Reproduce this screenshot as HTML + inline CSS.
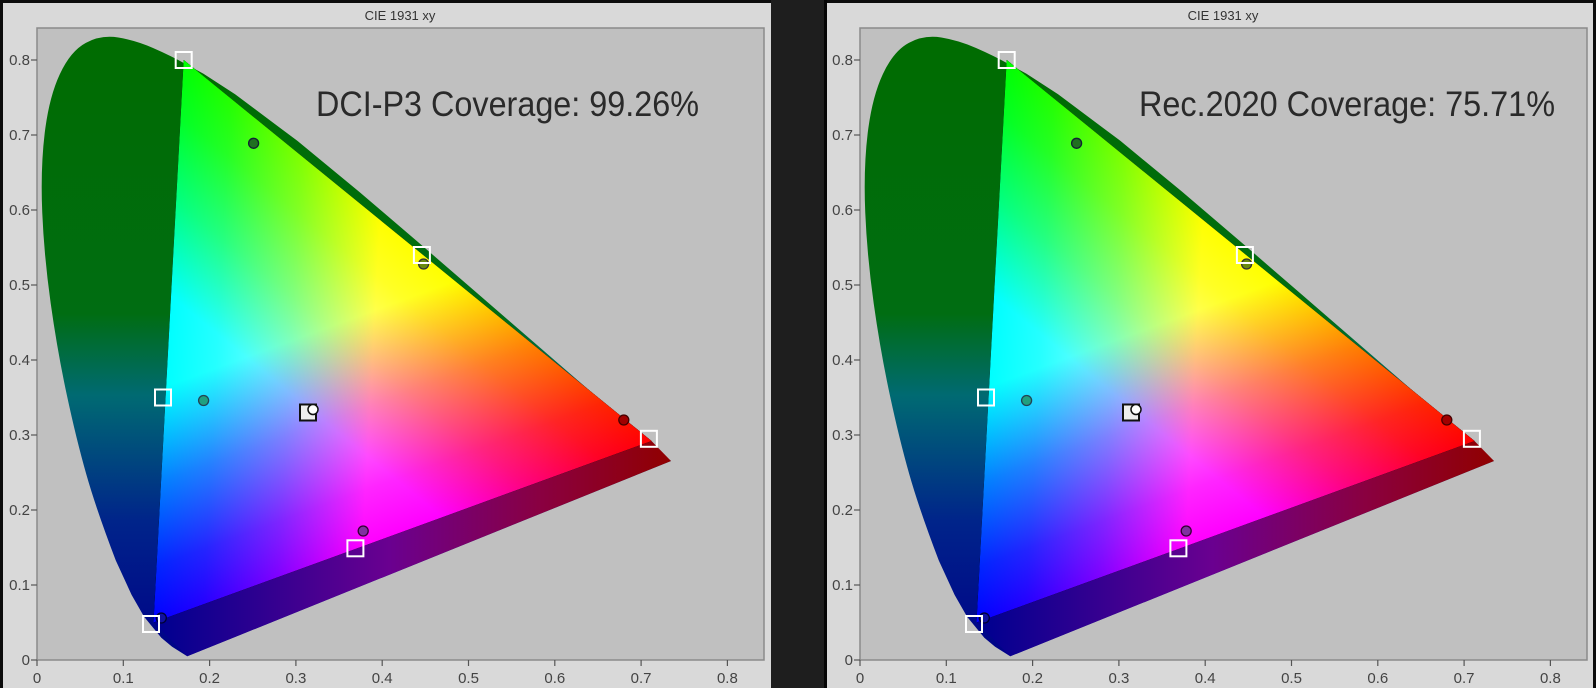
<!DOCTYPE html>
<html><head><meta charset="utf-8"><style>
html,body{margin:0;padding:0;background:#1e1e1e;width:1596px;height:688px;overflow:hidden}
svg{display:block}
text{font-family:"Liberation Sans",sans-serif}
</style></head><body>
<svg width="1596" height="688" viewBox="0 0 1596 688" xmlns="http://www.w3.org/2000/svg">
<defs>
<linearGradient id="lg" gradientUnits="userSpaceOnUse" x1="0" y1="30" x2="0" y2="660">
<stop offset="0" stop-color="#006c00"/><stop offset="0.45" stop-color="#006d12"/><stop offset="0.58" stop-color="#006a72"/><stop offset="0.78" stop-color="#00248a"/><stop offset="1" stop-color="#000088"/>
</linearGradient>
<linearGradient id="band" gradientUnits="userSpaceOnUse" x1="160" y1="0" x2="670" y2="0">
<stop offset="0" stop-color="#000090"/><stop offset="0.45" stop-color="#6a0090"/><stop offset="0.75" stop-color="#8a0040"/><stop offset="1" stop-color="#900000"/>
</linearGradient>
<linearGradient id="gG" gradientUnits="userSpaceOnUse" x1="183.7" y1="60" x2="361.2" y2="546.8">
<stop offset="0" stop-color="#00ff00"/><stop offset="0.58" stop-color="#00ff00"/><stop offset="0.75" stop-color="#008000"/><stop offset="0.9" stop-color="#002500"/><stop offset="1" stop-color="#000"/>
</linearGradient>
<linearGradient id="gR" gradientUnits="userSpaceOnUse" x1="651.5" y1="441" x2="164.6" y2="415">
<stop offset="0" stop-color="#ff0000"/><stop offset="0.58" stop-color="#ff0000"/><stop offset="0.75" stop-color="#800000"/><stop offset="0.9" stop-color="#250000"/><stop offset="1" stop-color="#000"/>
</linearGradient>
<linearGradient id="gB" gradientUnits="userSpaceOnUse" x1="153.5" y1="622.5" x2="441" y2="269.5">
<stop offset="0" stop-color="#0000ff"/><stop offset="0.58" stop-color="#0000ff"/><stop offset="0.75" stop-color="#000080"/><stop offset="0.9" stop-color="#000025"/><stop offset="1" stop-color="#000"/>
</linearGradient>
<g id="chart">
<rect x="37" y="28" width="727" height="632" fill="#c0c0c0" stroke="#8a8a8a" stroke-width="1.5"/>
<path fill="url(#lg)" d="M187.2,656.3 L172.1,646.7 L161.3,637.7 L144.1,616.7 L131.6,594.9 L115.8,560.5 Q96.3,509.5 86.25,474.15 Q76.2,438.8 66.75,394.65 Q57.3,350.5 50.7,303.35 Q44.1,256.2 42.25,212.55 Q40.4,168.9 44.7,133.15 Q49,97.4 59.8,74.2 Q70.6,51 85.85,42.85 Q101.1,34.7 118.35,37.55 Q135.6,40.4 153.05,48 Q170.5,55.6 187,64.7 L203.5,73.8 L235.1,94.3 L297.3,140.8 L359,191.6 L420.3,244 L479.3,295 L533.4,341.9 L578.1,380.6 L633.8,428.8 L657.5,449.3 L671,461 Z"/>
<polygon fill="url(#band)" points="153.5,622.5 187.2,656.3 671,461 651.5,441"/>
<g style="isolation:isolate">
<polygon fill="#000" points="183.7,60 651.5,441 153.5,622.5"/>
<polygon fill="url(#gG)" style="mix-blend-mode:screen" points="183.7,60 651.5,441 153.5,622.5"/>
<polygon fill="url(#gR)" style="mix-blend-mode:screen" points="183.7,60 651.5,441 153.5,622.5"/>
<polygon fill="url(#gB)" style="mix-blend-mode:screen" points="183.7,60 651.5,441 153.5,622.5"/>
</g>
<g stroke-width="1.3">
<circle cx="253.6" cy="143.3" r="5" fill="#207020" stroke="#123"/>
<circle cx="423.6" cy="264" r="5" fill="#6a8a10" stroke="#333"/>
<circle cx="203.6" cy="400.5" r="5" fill="#20a080" stroke="#245"/>
<circle cx="623.8" cy="420" r="5" fill="#a00000" stroke="#400"/>
<circle cx="363.2" cy="531" r="5" fill="#8030a0" stroke="#303"/>
<circle cx="161.3" cy="618" r="5" fill="#1010a0" stroke="#003"/>
</g>
<g fill="none" stroke="#fff" stroke-width="2">
<rect x="175.7" y="52" width="16" height="16"/>
<rect x="413.9" y="247" width="16" height="16"/>
<rect x="155" y="389.5" width="16" height="16"/>
<rect x="640.9" y="430.8" width="16" height="16"/>
<rect x="347.4" y="540.3" width="16" height="16"/>
<rect x="143" y="616" width="16" height="16"/>
</g>
<rect x="300" y="404.5" width="16" height="16" fill="#eee" stroke="#111" stroke-width="2"/>
<circle cx="313" cy="409.5" r="5" fill="#fff" stroke="#111" stroke-width="1.5"/>
<g stroke="#555" stroke-width="1.2">
<line x1="37" y1="660" x2="37" y2="666"/><line x1="123.3" y1="660" x2="123.3" y2="666"/><line x1="209.6" y1="660" x2="209.6" y2="666"/><line x1="295.9" y1="660" x2="295.9" y2="666"/><line x1="382.2" y1="660" x2="382.2" y2="666"/><line x1="468.5" y1="660" x2="468.5" y2="666"/><line x1="554.8" y1="660" x2="554.8" y2="666"/><line x1="641.1" y1="660" x2="641.1" y2="666"/><line x1="727.4" y1="660" x2="727.4" y2="666"/>
<line x1="31" y1="660" x2="37" y2="660"/><line x1="31" y1="585" x2="37" y2="585"/><line x1="31" y1="510" x2="37" y2="510"/><line x1="31" y1="435" x2="37" y2="435"/><line x1="31" y1="360" x2="37" y2="360"/><line x1="31" y1="285" x2="37" y2="285"/><line x1="31" y1="210" x2="37" y2="210"/><line x1="31" y1="135" x2="37" y2="135"/><line x1="31" y1="60" x2="37" y2="60"/>
</g>
</g>
</defs>

<rect x="0" y="0" width="771" height="688" fill="#0c0c0c"/>
<rect x="3" y="3" width="768" height="685" fill="#d9d9d9"/>
<use href="#chart"/>
<rect x="824" y="0" width="3" height="688" fill="#050505"/>
<rect x="827" y="0" width="769" height="688" fill="#0c0c0c"/>
<rect x="827" y="3" width="766" height="685" fill="#d9d9d9"/>
<use href="#chart" transform="translate(823,0)"/>

<g font-size="13" fill="#333" text-anchor="middle">
<text x="400" y="20">CIE 1931 xy</text>
<text x="1223" y="20">CIE 1931 xy</text>
</g>
<g font-size="35" fill="#2a2a2a">
<text x="316" y="116" textLength="383" lengthAdjust="spacingAndGlyphs">DCI-P3 Coverage: 99.26%</text>
<text x="1139" y="116" textLength="416" lengthAdjust="spacingAndGlyphs">Rec.2020 Coverage: 75.71%</text>
</g>
<g font-size="15" fill="#444" text-anchor="end">
<text x="30" y="665">0</text><text x="30" y="590">0.1</text><text x="30" y="515">0.2</text><text x="30" y="440">0.3</text><text x="30" y="365">0.4</text><text x="30" y="290">0.5</text><text x="30" y="215">0.6</text><text x="30" y="140">0.7</text><text x="30" y="65">0.8</text>
<text x="853" y="665">0</text><text x="853" y="590">0.1</text><text x="853" y="515">0.2</text><text x="853" y="440">0.3</text><text x="853" y="365">0.4</text><text x="853" y="290">0.5</text><text x="853" y="215">0.6</text><text x="853" y="140">0.7</text><text x="853" y="65">0.8</text>
</g>
<g font-size="15" fill="#444" text-anchor="middle">
<text x="37" y="683">0</text><text x="123.3" y="683">0.1</text><text x="209.6" y="683">0.2</text><text x="295.9" y="683">0.3</text><text x="382.2" y="683">0.4</text><text x="468.5" y="683">0.5</text><text x="554.8" y="683">0.6</text><text x="641.1" y="683">0.7</text><text x="727.4" y="683">0.8</text>
<text x="860" y="683">0</text><text x="946.3" y="683">0.1</text><text x="1032.6" y="683">0.2</text><text x="1118.9" y="683">0.3</text><text x="1205.2" y="683">0.4</text><text x="1291.5" y="683">0.5</text><text x="1377.8" y="683">0.6</text><text x="1464.1" y="683">0.7</text><text x="1550.4" y="683">0.8</text>
</g>
</svg>
</body></html>
